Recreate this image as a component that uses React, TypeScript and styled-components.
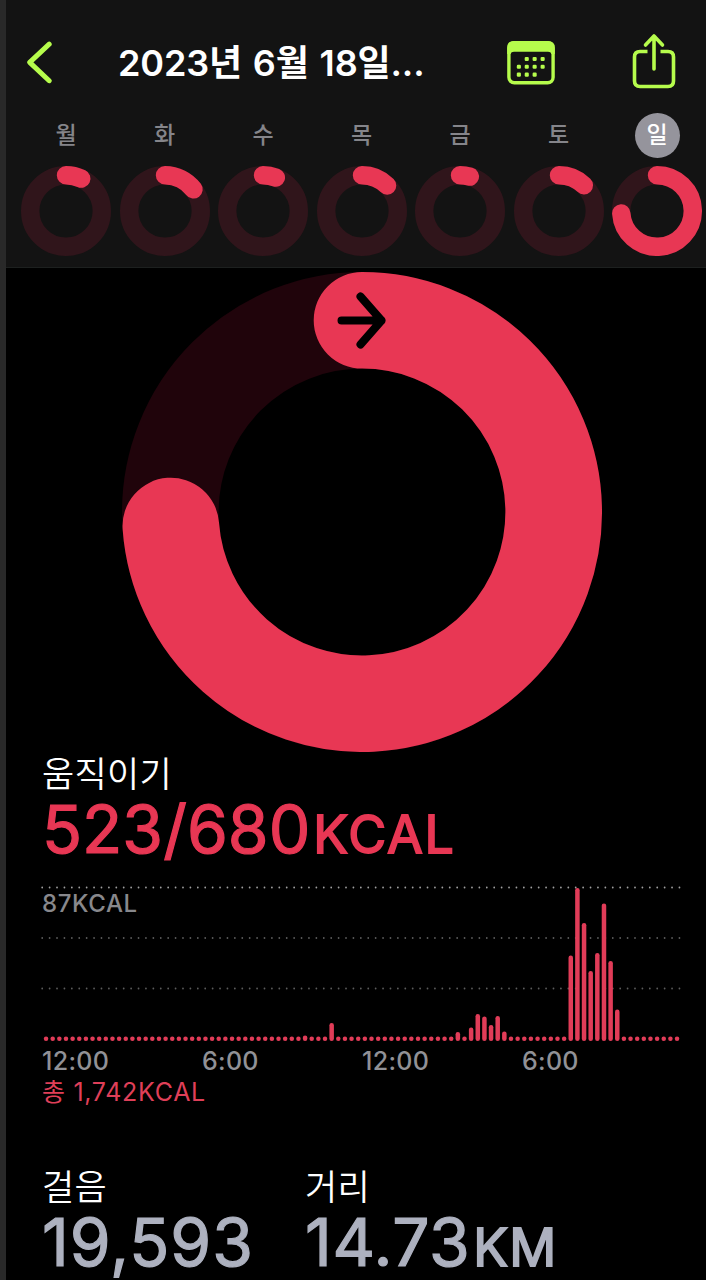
import React from "react";
import styled, { createGlobalStyle } from "styled-components";

const RED = "#e83754";
const LIME = "#b6fc4c";

const GlobalStyle = createGlobalStyle`
  body { margin: 0; background: #000; }
  * { box-sizing: border-box; }
`;

const Screen = styled.main`
  width: 706px;
  height: 1280px;
  overflow: hidden;
  background: #000;
  border-left: 6px solid #292929;
  font-family: Inter, "Noto Sans CJK KR", sans-serif;
  color: #fff;
  display: flex;
  flex-direction: column;
`;

const Header = styled.header`
  flex: none;
  height: 268px;
  background: #131313;
  border-bottom: 1px solid #1d201f;
`;

const NavBar = styled.div`
  height: 112px;
  padding: 12px 29px 0 19px;
  display: flex;
  align-items: center;
`;

const IconButton = styled.button<{ $gap?: number }>`
  display: flex;
  padding: 0;
  border: 0;
  background: none;
  color: ${LIME};
  margin-left: ${(p) => p.$gap ?? 0}px;
`;

const Title = styled.h1`
  margin: 2px 0 0 63px;
  width: 391px;
  font-size: 36px;
  line-height: 50px;
  font-weight: 600;
  letter-spacing: -0.15px;
  word-spacing: 2px;
  white-space: nowrap;
`;

const Week = styled.div`
  display: grid;
  grid-template-columns: repeat(7, 98.5px);
  padding-left: 10.8px;
`;

const Day = styled.div`
  display: flex;
  flex-direction: column;
  align-items: center;
  gap: 8px;
`;

const DayName = styled.span<{ $active?: boolean }>`
  width: 45px;
  height: 45px;
  margin-top: 1px;
  border-radius: 50%;
  display: flex;
  align-items: center;
  justify-content: center;
  font-size: 23px;
  line-height: 45px;
  font-weight: 500;
  color: ${(p) => (p.$active ? "#fff" : "#85858a")};
  background: ${(p) => (p.$active ? "#95949c" : "transparent")};
`;

const BigRing = styled.section`
  flex: none;
  height: 485px;
  padding: 4px 0 0 116px;
`;

const Block = styled.div`
  padding-left: 36px;
`;

const Label = styled.h2`
  margin: 0;
  height: 42px;
  font-size: 35px;
  line-height: 42px;
  font-weight: 350;
  letter-spacing: 0.3px;
`;

const Value = styled.div<{ $color: string; $tracking: number }>`
  height: 70px;
  font-size: 66px;
  line-height: 68px;
  font-weight: 400;
  color: ${(p) => p.$color};
  letter-spacing: ${(p) => p.$tracking}px;
  white-space: nowrap;
  -webkit-text-stroke: 1.2px ${(p) => p.$color};
`;

const Unit = styled.span<{ $tracking: number }>`
  margin-left: 3px;
  font-size: 52px;
  -webkit-text-stroke-width: 1.8px;
  letter-spacing: ${(p) => p.$tracking}px;
`;

const Chart = styled.div`
  position: relative;
  height: 160px;
  margin: 18px 0 0 -1px;
  svg { display: block; }
`;

const Peak = styled.span`
  position: absolute;
  left: 1px;
  top: 6px;
  font-size: 24px;
  line-height: 30px;
  font-weight: 500;
  letter-spacing: 0.6px;
  color: #88888c;
`;

const Axis = styled.div`
  display: grid;
  grid-template-columns: repeat(4, 160px);
  height: 30px;
  margin-top: 3px;
  font-size: 25px;
  line-height: 30px;
  font-weight: 500;
  letter-spacing: 0.3px;
  color: #919196;
`;

const Total = styled.div`
  height: 32px;
  font-size: 25px;
  line-height: 32px;
  letter-spacing: 0.7px;
  color: #df3f58;
`;

const Stats = styled.section`
  display: grid;
  grid-template-columns: 263px 300px;
  padding-left: 36px;
  margin-top: 58px;
`;

interface RingProps {
  size: number;
  stroke: number;
  angle: number;
  track: string;
  children?: React.ReactNode;
}

function Ring({ size, stroke, angle, track, children }: RingProps) {
  const c = size / 2;
  const r = (size - stroke) / 2;
  const a = (angle * Math.PI) / 180;
  const x = c + r * Math.sin(a);
  const y = c - r * Math.cos(a);
  return (
    <svg width={size} height={size} viewBox={`0 0 ${size} ${size}`} fill="none">
      <circle cx={c} cy={c} r={r} stroke={track} strokeWidth={stroke} />
      <path
        d={`M${c} ${c - r}A${r} ${r} 0 ${angle > 180 ? 1 : 0} 1 ${x} ${y}`}
        stroke={RED}
        strokeWidth={stroke}
        strokeLinecap="round"
      />
      {children}
    </svg>
  );
}

const days = [
  { name: "월", angle: 25.3 },
  { name: "화", angle: 52.8 },
  { name: "수", angle: 21 },
  { name: "목", angle: 44.5 },
  { name: "금", angle: 16 },
  { name: "토", angle: 44 },
  { name: "일", angle: 266.2, active: true },
];

const peaks: Record<number, number> = {
  39: 5.5, 43: 18, 62: 9, 64: 13.5, 65: 27, 66: 24.5, 67: 16, 68: 25, 69: 9.5,
  79: 85.5, 80: 153, 81: 118, 82: 70, 83: 88, 84: 137.5, 85: 80, 86: 31.5,
};
const bars = Array.from({ length: 96 }, (_, i) => peaks[i] ?? 4.4);

function BarChart() {
  return (
    <svg width="645" height="160" fill="none">
      {[4.5, 55, 105.5].map((y, i) => (
        <line
          key={y}
          x1="1.2"
          x2="640"
          y1={y}
          y2={y}
          stroke={i === 0 ? "#a0a0a0" : "#5c5c5c"}
          strokeWidth="1.8"
          strokeLinecap="round"
          strokeDasharray="0 7.41"
        />
      ))}
      {bars.map((h, i) => (
        <rect key={i} x={2.8 + i * 6.642} y={158 - h} width="4.5" height={h} rx="2.2" fill="#e13c58" />
      ))}
    </svg>
  );
}

const calendarDots = [
  [20.2, 18.2], [28.1, 18.2], [36.1, 18.2],
  [12.3, 26], [20.2, 26], [28.1, 26], [36.1, 26],
  [12.3, 33.9], [20.2, 33.9], [28.1, 33.9],
];

export default function App() {
  return (
    <Screen>
      <GlobalStyle />
      <Header>
        <NavBar>
          <IconButton aria-label="back">
            <svg width="30" height="44" fill="none" stroke="currentColor" strokeWidth="5" strokeLinecap="round" strokeLinejoin="round">
              <path d="M24.2 4.2L4.7 22.4L24.2 40.7" />
            </svg>
          </IconButton>
          <Title>2023년 6월 18일...</Title>
          <IconButton aria-label="calendar" $gap={-1.3}>
            <svg width="49" height="46" fill="none">
              <rect x="1.9" y="3.7" width="44.2" height="40.1" rx="5.5" stroke="currentColor" strokeWidth="3.4" />
              <path d="M0.2 12V8.500Q0.2 2 7 2H41Q47.800 2 47.800 8.500V15H44.400Q44 12.800 41 12.800H7Q4 12.800 3.600 15H0.2Z" fill="currentColor" />
              {calendarDots.map(([x, y]) => (
                <rect key={`${x}-${y}`} x={x - 2.5} y={y - 0.3} width="4.1" height="4.1" rx="1.2" fill="currentColor" />
              ))}
            </svg>
          </IconButton>
          <IconButton aria-label="share" $gap={75.3}>
            <svg width="46" height="58" fill="none" stroke="currentColor" strokeWidth="3.6" strokeLinecap="round" strokeLinejoin="round">
              <path d="M16.500 18.500H9Q3.500 18.500 3.500 24V48Q3.500 53.500 9 53.500H37Q42.500 53.500 42.500 48V24Q42.500 18.500 37 18.500H29.500" strokeLinecap="butt" />
              <path d="M23 36V3.500M14.500 12L23 3L31.500 12" />
            </svg>
          </IconButton>
        </NavBar>
        <Week>
          {days.map((d) => (
            <Day key={d.name}>
              <DayName $active={d.active}>{d.name}</DayName>
              <Ring size={90} stroke={18.4} angle={d.angle} track="#30151b" />
            </Day>
          ))}
        </Week>
      </Header>
      <BigRing>
        <Ring size={480} stroke={96.6} angle={265.8} track="#20040b">
          <path d="M219.500 48.500H259.500M238.500 24.500L259.500 48.500L238.500 72.500" stroke="#000" strokeWidth="8" strokeLinecap="round" strokeLinejoin="round" />
        </Ring>
      </BigRing>
      <Block>
        <Label>움직이기</Label>
        <Value $color={RED} $tracking={0}>
          523/680<Unit $tracking={1.7}>KCAL</Unit>
        </Value>
        <Chart>
          <BarChart />
          <Peak>87KCAL</Peak>
        </Chart>
        <Axis>
          <span>12:00</span>
          <span>6:00</span>
          <span>12:00</span>
          <span>6:00</span>
        </Axis>
        <Total>총 1,742KCAL</Total>
      </Block>
      <Stats>
        <div>
          <Label>걸음</Label>
          <Value $color="#adb1bf" $tracking={1}>19,593</Value>
        </div>
        <div>
          <Label>거리</Label>
          <Value $color="#adb1bf" $tracking={0.6}>
            14.73<Unit $tracking={1}>KM</Unit>
          </Value>
        </div>
      </Stats>
    </Screen>
  );
}
